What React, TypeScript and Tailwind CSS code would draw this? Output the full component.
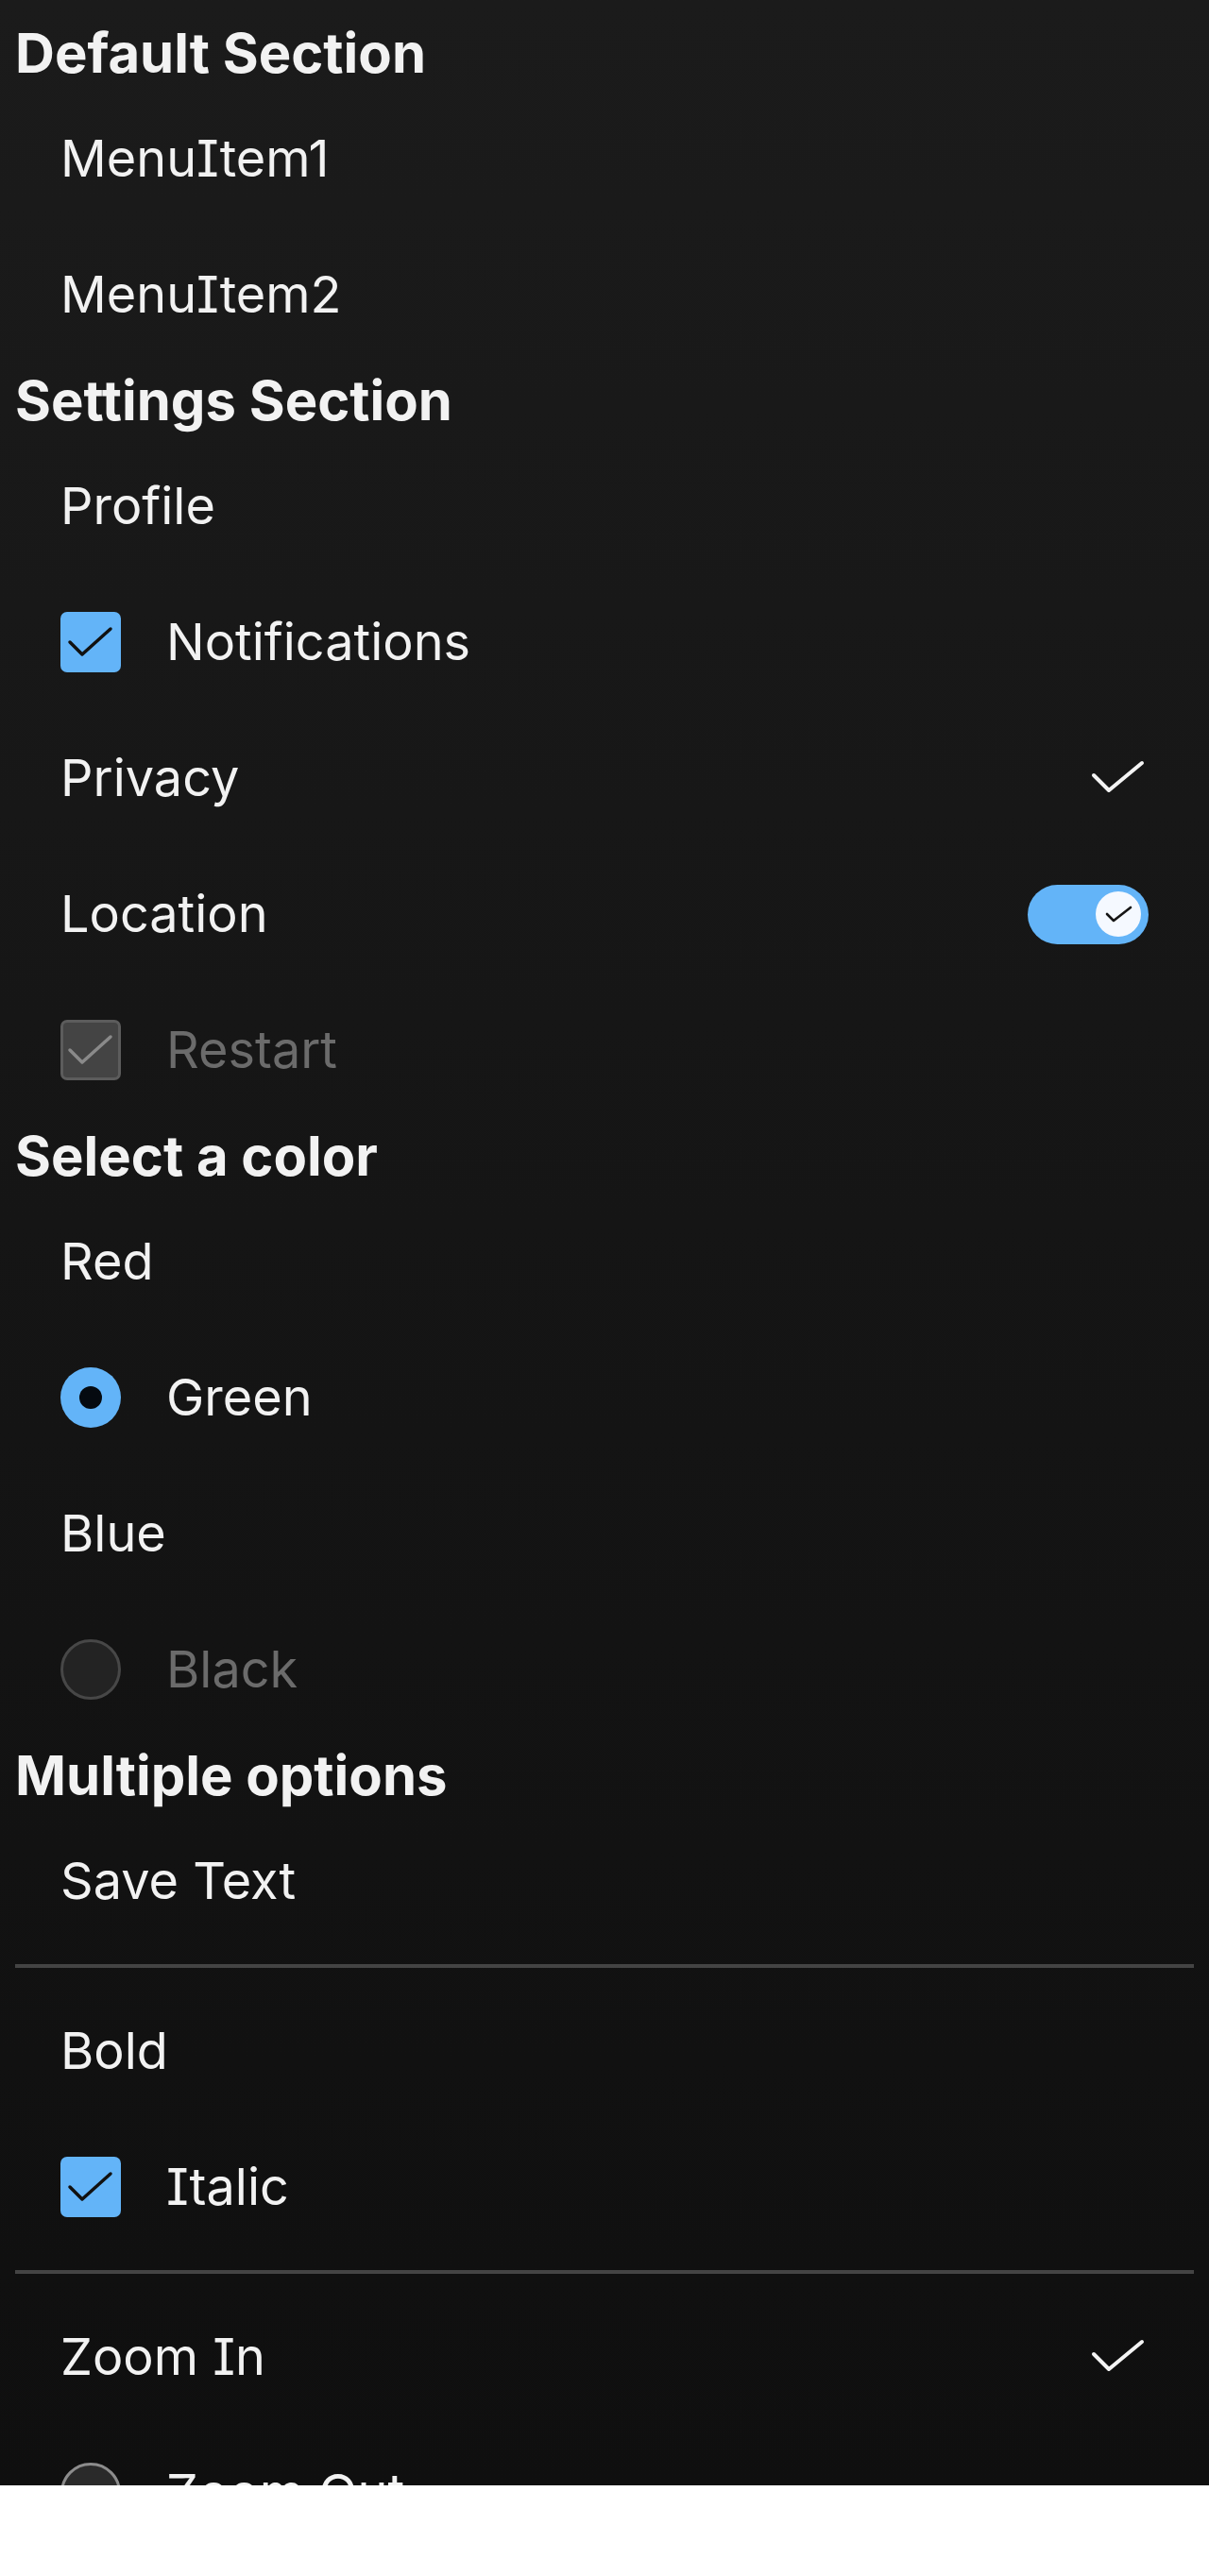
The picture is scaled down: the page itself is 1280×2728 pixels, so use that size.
import type { ReactNode } from 'react';

type Item = {
  label: string;
  lead?: 'checkbox' | 'checkbox-disabled' | 'radio' | 'radio-off' | 'radio-disabled';
  trail?: 'check' | 'toggle';
  disabled?: boolean;
};

type Block = { heading: string; rows: (Item | 'divider')[] };

const blocks: Block[] = [
  {
    heading: 'Default Section',
    rows: [{ label: 'MenuItem1' }, { label: 'MenuItem2' }],
  },
  {
    heading: 'Settings Section',
    rows: [
      { label: 'Profile' },
      { label: 'Notifications', lead: 'checkbox' },
      { label: 'Privacy', trail: 'check' },
      { label: 'Location', trail: 'toggle' },
      { label: 'Restart', lead: 'checkbox-disabled', disabled: true },
    ],
  },
  {
    heading: 'Select a color',
    rows: [
      { label: 'Red' },
      { label: 'Green', lead: 'radio' },
      { label: 'Blue' },
      { label: 'Black', lead: 'radio-disabled', disabled: true },
    ],
  },
  {
    heading: 'Multiple options',
    rows: [
      { label: 'Save Text' },
      'divider',
      { label: 'Bold' },
      { label: 'Italic', lead: 'checkbox' },
      'divider',
      { label: 'Zoom In', trail: 'check' },
      { label: 'Zoom Out', lead: 'radio-off' },
    ],
  },
];

function Checkbox({ disabled }: { disabled?: boolean }) {
  return (
    <div
      className={
        disabled
          ? 'w-16 h-16 rounded-[7px] border-[3px] border-[#5c5c5c] bg-[#444444] shrink-0'
          : 'w-16 h-16 rounded-[7px] bg-[#63b4f8] shrink-0'
      }
    >
      <svg width="64" height="64" viewBox="0 0 64 64" className={disabled ? '-m-[3px]' : ''}>
        <polyline
          points="10,32 23,45 53,18"
          fill="none"
          stroke={disabled ? '#8a8a8a' : '#111111'}
          strokeWidth="3.5"
          strokeLinecap="round"
          strokeLinejoin="round"
        />
      </svg>
    </div>
  );
}

function Radio({ kind }: { kind: 'radio' | 'radio-off' | 'radio-disabled' }) {
  if (kind === 'radio') {
    return (
      <div className="w-16 h-16 rounded-full bg-[#63b4f8] flex items-center justify-center shrink-0">
        <div className="w-6 h-6 rounded-full bg-[#050a10]" />
      </div>
    );
  }
  return (
    <div
      className={
        kind === 'radio-disabled'
          ? 'w-16 h-16 rounded-full border-[3px] border-[#474747] bg-[#232323] shrink-0'
          : 'w-16 h-16 rounded-full border-[3px] border-[#8c8c8c] bg-[#2a2a2a] shrink-0'
      }
    />
  );
}

function Tick() {
  return (
    <svg width="64" height="40" viewBox="0 0 64 40" className="shrink-0">
      <polyline
        points="6,17 22,33 57,4"
        fill="none"
        stroke="#f4f4f4"
        strokeWidth="4"
        strokeLinecap="round"
        strokeLinejoin="round"
      />
    </svg>
  );
}

function Toggle() {
  return (
    <div className="w-32 h-[63px] rounded-full bg-[#63b4f8] flex items-center justify-end pr-2 shrink-0">
      <div className="w-12 h-12 rounded-full bg-[#f5f9ff] flex items-center justify-center">
        <svg width="48" height="48" viewBox="0 0 48 48">
          <polyline
            points="12,24 19,31 37,17"
            fill="none"
            stroke="#151515"
            strokeWidth="2.6"
            strokeLinecap="round"
            strokeLinejoin="round"
          />
        </svg>
      </div>
    </div>
  );
}

function Row({ item }: { item: Item }) {
  let lead: ReactNode = null;
  if (item.lead === 'checkbox') lead = <Checkbox />;
  if (item.lead === 'checkbox-disabled') lead = <Checkbox disabled />;
  if (item.lead === 'radio' || item.lead === 'radio-off' || item.lead === 'radio-disabled')
    lead = <Radio kind={item.lead} />;

  return (
    <div className="h-[144px] flex items-center pl-16 pr-16">
      {lead && <div className="mr-12 flex">{lead}</div>}
      <span
        className={
          item.disabled
            ? 'flex-1 text-[54px] leading-none text-[#6b6b6b]'
            : 'flex-1 text-[54px] leading-none text-[#f2f2f2]'
        }
      >
        {item.label}
      </span>
      {item.trail === 'check' && <Tick />}
      {item.trail === 'toggle' && <Toggle />}
    </div>
  );
}

export default function App() {
  return (
    <div className="h-[2632px] overflow-hidden bg-gradient-to-b from-[#1b1b1b] to-[#0f0f0f] pt-4 font-['Inter','Liberation_Sans',sans-serif] [font-feature-settings:'cv08']">
      {blocks.map((block) => (
        <div key={block.heading}>
          <div className="h-20 flex items-center px-4">
            <h2 className="text-[58px] leading-none font-bold text-[#f2f2f2]">{block.heading}</h2>
          </div>
          {block.rows.map((row, i) =>
            row === 'divider' ? (
              <div key={i} className="mx-4 my-4 h-1 bg-[#444444]" />
            ) : (
              <Row key={i} item={row} />
            )
          )}
        </div>
      ))}
    </div>
  );
}
